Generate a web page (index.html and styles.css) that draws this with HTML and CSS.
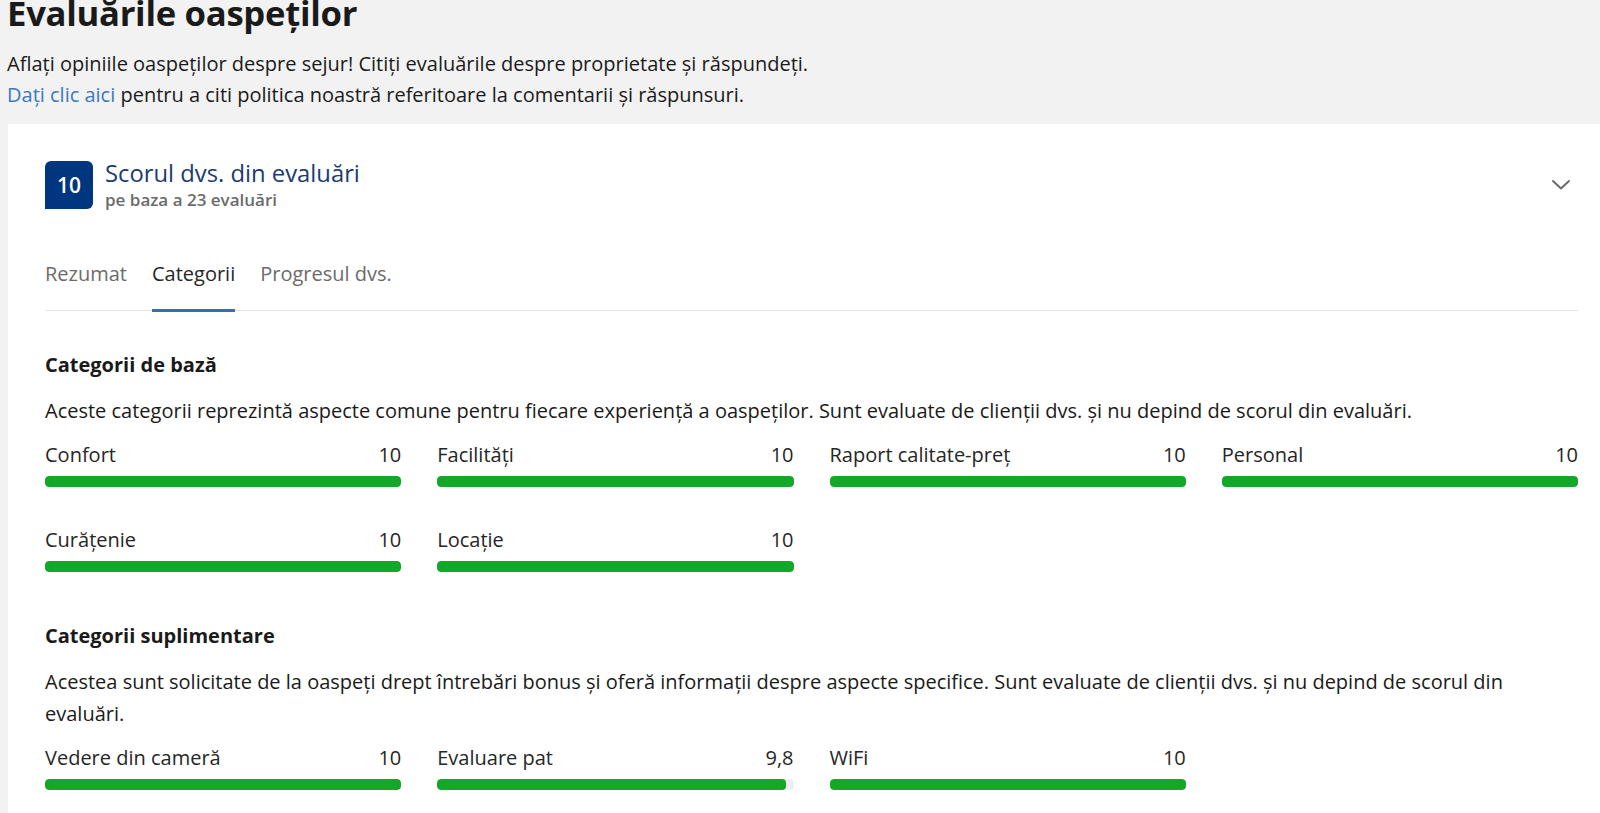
FILE: index.html
```html
<!DOCTYPE html>
<html lang="ro">
<head>
  <meta charset="UTF-8" />
  <meta name="viewport" content="width=device-width, initial-scale=1.0"/>
  <title>Evaluările oaspeților</title>
  <link rel="stylesheet" href="styles.css">
</head>
<body>

  <!-- Antet pagina -->
  <div class="intro">
    <h1 class="pageTitle">Evaluările oaspeților</h1>
    <p class="introText">Aflați opiniile oaspeților despre sejur! Citiți evaluările despre proprietate și răspundeți.<br>
      <a href="#" class="introLink">Dați clic aici</a> pentru a citi politica noastră referitoare la comentarii și răspunsuri.</p>
  </div>

  <div class="card">
    <div class="scoreHead">
      <div class="badge">10</div>
      <div class="scoreText">
        <div class="scoreTitle">Scorul dvs. din evaluări</div>
        <div class="scoreSub">pe baza a 23 evaluări</div>
      </div>
      <svg class="chevron" width="20" height="12" viewBox="0 0 20 12">
        <path d="M2 2 L10 9.5 L18 2" fill="none" stroke="#6b6b6b" stroke-width="2" stroke-linecap="round" stroke-linejoin="round"/>
      </svg>
    </div>

    <div class="tabs">
      <span class="tab">Rezumat</span>
      <span class="tab active">Categorii</span>
      <span class="tab">Progresul dvs.</span>
    </div>

    <!-- Categorii de baza -->
    <div class="section">
      <h3 class="sectionTitle">Categorii de bază</h3>
      <p class="sectionText">Aceste categorii reprezintă aspecte comune pentru fiecare experiență a oaspeților. Sunt evaluate de clienții dvs. și nu depind de scorul din evaluări.</p>
      <div class="grid">
        <div class="item">
          <div class="itemRow"><span>Confort</span><span>10</span></div>
          <div class="bar"><div class="fill" style="width: 100%"></div></div>
        </div>
        <div class="item">
          <div class="itemRow"><span>Facilități</span><span>10</span></div>
          <div class="bar"><div class="fill" style="width: 100%"></div></div>
        </div>
        <div class="item">
          <div class="itemRow"><span>Raport calitate-preț</span><span>10</span></div>
          <div class="bar"><div class="fill" style="width: 100%"></div></div>
        </div>
        <div class="item">
          <div class="itemRow"><span>Personal</span><span>10</span></div>
          <div class="bar"><div class="fill" style="width: 100%"></div></div>
        </div>
        <div class="item">
          <div class="itemRow"><span>Curățenie</span><span>10</span></div>
          <div class="bar"><div class="fill" style="width: 100%"></div></div>
        </div>
        <div class="item">
          <div class="itemRow"><span>Locație</span><span>10</span></div>
          <div class="bar"><div class="fill" style="width: 100%"></div></div>
        </div>
      </div>
    </div>

    <!-- Categorii suplimentare -->
    <div class="section">
      <h3 class="sectionTitle">Categorii suplimentare</h3>
      <p class="sectionText">Acestea sunt solicitate de la oaspeți drept întrebări bonus și oferă informații despre aspecte specifice. Sunt evaluate de clienții dvs. și nu depind de scorul din evaluări.</p>
      <div class="grid">
        <div class="item">
          <div class="itemRow"><span>Vedere din cameră</span><span>10</span></div>
          <div class="bar"><div class="fill" style="width: 100%"></div></div>
        </div>
        <div class="item">
          <div class="itemRow"><span>Evaluare pat</span><span>9,8</span></div>
          <div class="bar"><div class="fill" style="width: 98%"></div></div>
        </div>
        <div class="item">
          <div class="itemRow"><span>WiFi</span><span>10</span></div>
          <div class="bar"><div class="fill" style="width: 100%"></div></div>
        </div>
      </div>
    </div>
  </div>

</body>
</html>
```

FILE: styles.css
```css
body {
  font-family: "Open Sans", Arial, sans-serif;
  background-color: #f2f2f2;
  color: #1a1a1a;
  margin: 0;
  overflow: hidden;
}

/* Antet */
.intro {
  padding-left: 7px;
}

.pageTitle {
  font-size: 34.7px;
  font-weight: 700;
  margin: -9px 0 0 0;
  line-height: 44px;
  letter-spacing: -0.3px;
}

.introText {
  font-size: 20px;
  line-height: 31px;
  margin: 13px 0 0 0;
}

.introLink {
  color: #3d78c2;
  text-decoration: none;
}

/* Card principal */
.card {
  background-color: #fff;
  margin: 14px 0 0 8px;
  padding: 35px 22px 40px 37px;
}

.scoreHead {
  display: flex;
  align-items: center;
}

.badge {
  width: 48px;
  height: 48px;
  background-color: #003580;
  color: #fff;
  font-size: 21px;
  font-weight: 600;
  border-radius: 6px 6px 6px 0;
  display: flex;
  align-items: center;
  justify-content: center;
}

.scoreText {
  margin-left: 12px;
  flex: 1;
}

.scoreTitle {
  font-size: 23.8px;
  color: #1b3c70;
  line-height: 28px;
}

.scoreSub {
  font-size: 17px;
  font-weight: 600;
  color: #6b6b6b;
  line-height: 22px;
  margin-top: 2px;
}

.chevron {
  margin-right: 7px;
}

/* Abas */
.tabs {
  display: flex;
  gap: 25px;
  margin-top: 49px;
  border-bottom: 1px solid #e6e6e6;
}

.tab {
  font-size: 20px;
  color: #6b6b6b;
  padding-bottom: 22px;
  border-bottom: 3px solid transparent;
  margin-bottom: -2px;
}

.tab.active {
  color: #262626;
  border-bottom-color: #3a6ea8;
}

/* Secoes */
.section {
  margin-top: 40px;
}

.section + .section {
  margin-top: 50px;
}

.sectionTitle {
  font-size: 20px;
  font-weight: 700;
  margin: 0;
  line-height: 28px;
}

.sectionText {
  font-size: 20px;
  line-height: 32px;
  margin: 16px 0 0 0;
}

.grid {
  display: grid;
  grid-template-columns: repeat(4, 1fr);
  column-gap: 36px;
  row-gap: 39px;
  margin-top: 14px;
}

.itemRow {
  display: flex;
  justify-content: space-between;
  font-size: 20px;
  line-height: 28px;
  color: #262626;
}

.bar {
  height: 11px;
  background-color: #efefef;
  border-radius: 4px;
  margin-top: 7px;
  overflow: hidden;
}

.fill {
  height: 100%;
  background-color: #12a82a;
  border-radius: 4px;
}
```
